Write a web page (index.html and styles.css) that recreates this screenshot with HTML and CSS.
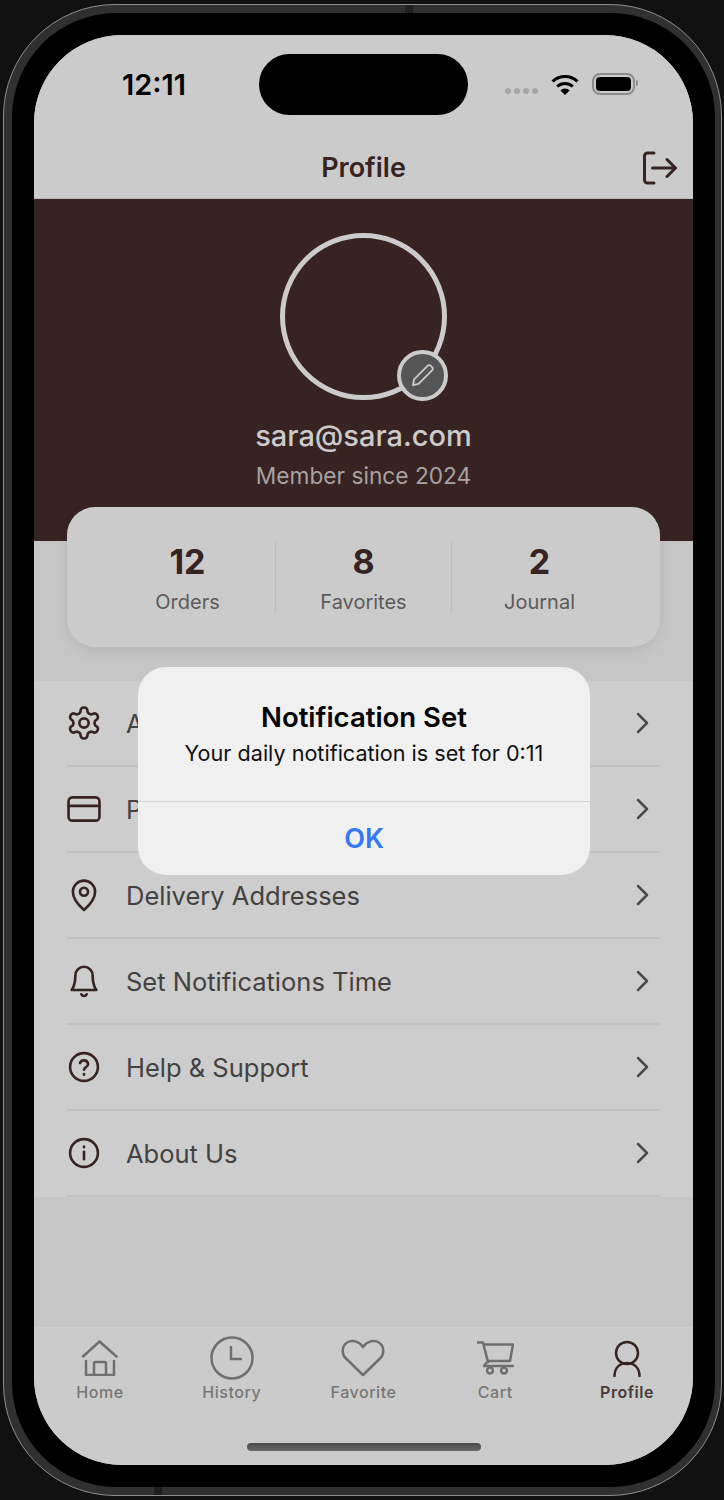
FILE: index.html
```html
<!DOCTYPE html>
<html lang="en">
<head>
    <meta charset="UTF-8">
    <meta name="viewport" content="width=device-width, initial-scale=1">
    <title>Profile</title>
    <link rel="stylesheet" href="styles.css">
</head>
<body>
<div class="device">
    <div class="bezel">
        <div class="screen">
            <div class="island"></div>

            <div class="status-bar">
                <span class="time">12:11</span>
                <div class="status-icons">
                    <div class="signal"><i></i><i></i><i></i><i></i></div>
                    <svg class="wifi" viewBox="0 0 28 21">
                        <path d="M1.5 7.5a18 18 0 0 1 25 0M6.2 12.5a11.5 11.5 0 0 1 15.6 0" fill="none" stroke="#000" stroke-width="3"/>
                        <path d="M14 21l-4.6-4.6a6.5 6.5 0 0 1 9.2 0z"/>
                    </svg>
                    <div class="battery"><i></i></div>
                </div>
            </div>

            <div class="header">
                <span></span>
                <h1>Profile</h1>
                <svg class="logout" viewBox="0 0 35 34">
                    <path d="M12 2H5.500a3 3 0 0 0-3 3v24a3 3 0 0 0 3 3H12M10.500 17h23M25 8.500l8.500 8.500-8.500 8.500"/>
                </svg>
            </div>

            <div class="hero">
                <div class="avatar">
                    <div class="edit-badge">
                        <svg viewBox="0 0 24 24">
                            <path d="M3.500 20.500l1-5L16.500 3.500a2 2 0 0 1 3 0l1 1a2 2 0 0 1 0 3L8.500 19.500z"/>
                        </svg>
                    </div>
                </div>
                <div class="email">sara@sara.com</div>
                <div class="member">Member since 2024</div>
            </div>

            <div class="stats">
                <div class="stat"><b>12</b><span>Orders</span></div>
                <div class="stat"><b>8</b><span>Favorites</span></div>
                <div class="stat"><b>2</b><span>Journal</span></div>
            </div>

            <div class="menu">
                <div class="row">
                    <svg class="row-icon" viewBox="1 1 22 22">
                        <path d="M12.220 2h-.44a2 2 0 0 0-2 2v.18a2 2 0 0 1-1 1.730l-.43.25a2 2 0 0 1-2 0l-.15-.08a2 2 0 0 0-2.730.73l-.22.38a2 2 0 0 0 .73 2.730l.15.1a2 2 0 0 1 1 1.720v.51a2 2 0 0 1-1 1.740l-.15.09a2 2 0 0 0-.73 2.730l.22.38a2 2 0 0 0 2.730.73l.15-.08a2 2 0 0 1 2 0l.43.25a2 2 0 0 1 1 1.730V20a2 2 0 0 0 2 2h.44a2 2 0 0 0 2-2v-.18a2 2 0 0 1 1-1.730l.43-.25a2 2 0 0 1 2 0l.15.08a2 2 0 0 0 2.730-.73l.22-.39a2 2 0 0 0-.73-2.730l-.15-.08a2 2 0 0 1-1-1.740v-.5a2 2 0 0 1 1-1.740l.15-.09a2 2 0 0 0 .73-2.730l-.22-.38a2 2 0 0 0-2.730-.73l-.15.08a2 2 0 0 1-2 0l-.43-.25a2 2 0 0 1-1-1.730V4a2 2 0 0 0-2-2z"/>
                        <circle cx="12" cy="12" r="3"/>
                    </svg>
                    <span>Account</span>
                    <svg class="chevron" viewBox="0 0 14 22"><path d="M2 2l9 9-9 9"/></svg>
                </div>
                <div class="row">
                    <svg class="row-icon" viewBox="1 1 22 22">
                        <rect x="2" y="4.500" width="20" height="15" rx="2.500"/>
                        <path d="M2 10h20"/>
                    </svg>
                    <span>Payment Methods</span>
                    <svg class="chevron" viewBox="0 0 14 22"><path d="M2 2l9 9-9 9"/></svg>
                </div>
                <div class="row">
                    <svg class="row-icon" viewBox="1 1 22 22">
                        <path d="M12 21.700C10.600 20.500 4.800 15.400 4.800 9.900a7.200 7.200 0 0 1 14.400 0c0 5.500-5.800 10.600-7.200 11.800z"/>
                        <circle cx="12" cy="9.900" r="2.600"/>
                    </svg>
                    <span>Delivery Addresses</span>
                    <svg class="chevron" viewBox="0 0 14 22"><path d="M2 2l9 9-9 9"/></svg>
                </div>
                <div class="row">
                    <svg class="row-icon" viewBox="1 1 22 22">
                        <path d="M12 2.800a5.600 5.600 0 0 0-5.600 5.600c0 5-1 7.500-2.400 9.400h16c-1.400-1.900-2.400-4.400-2.400-9.400A5.600 5.600 0 0 0 12 2.800zM10.300 20.600a1.900 1.900 0 0 0 3.400 0"/>
                    </svg>
                    <span>Set Notifications Time</span>
                    <svg class="chevron" viewBox="0 0 14 22"><path d="M2 2l9 9-9 9"/></svg>
                </div>
                <div class="row">
                    <svg class="row-icon" viewBox="1 1 22 22">
                        <circle cx="12" cy="12" r="9"/>
                        <path d="M9.400 9.400a2.700 2.700 0 0 1 5.200.8c0 1.700-2.600 2.200-2.600 3.600M12 16.600v.4"/>
                    </svg>
                    <span>Help &amp; Support</span>
                    <svg class="chevron" viewBox="0 0 14 22"><path d="M2 2l9 9-9 9"/></svg>
                </div>
                <div class="row">
                    <svg class="row-icon" viewBox="1 1 22 22">
                        <circle cx="12" cy="12" r="9"/>
                        <path d="M12 7.900v.4M12 11.200v4.800"/>
                    </svg>
                    <span>About Us</span>
                    <svg class="chevron" viewBox="0 0 14 22"><path d="M2 2l9 9-9 9"/></svg>
                </div>
            </div>

            <div class="spacer"></div>

            <div class="tab-bar">
                <div class="tabs">
                    <div class="tab">
                        <div class="tab-icon">
                            <svg width="36" height="36" viewBox="0 0 36 36">
                                <path d="M1 16.500 17.500 1.500l17 15M4 21v14h28V21M12 35V23.500a1.500 1.500 0 0 1 1.500-1.500h9a1.500 1.500 0 0 1 1.500 1.500V35"/>
                            </svg>
                        </div>
                        <span>Home</span>
                    </div>
                    <div class="tab">
                        <div class="tab-icon">
                            <svg width="44" height="44" viewBox="0 0 44 44">
                                <circle cx="22" cy="22" r="20.500"/>
                                <path d="M21 11v12h10"/>
                            </svg>
                        </div>
                        <span>History</span>
                    </div>
                    <div class="tab">
                        <div class="tab-icon">
                            <svg width="44" height="38" viewBox="0 0 44 38">
                                <path d="M22 36 5 19.500C0 14.500 1 7 6 3.500 11 .5 18 2 22 8c4-6 11-7.500 16-4.500 5 3.500 6 11 1 16z"/>
                            </svg>
                        </div>
                        <span>Favorite</span>
                    </div>
                    <div class="tab">
                        <div class="tab-icon">
                            <svg width="37" height="35" viewBox="0 0 37 35">
                                <path d="M0 1.500h6L11 21M7 3.500h29l-3 16.500H11l-4 5h29"/>
                                <circle cx="13" cy="29.500" r="3"/>
                                <circle cx="27" cy="29.500" r="3"/>
                            </svg>
                        </div>
                        <span>Cart</span>
                    </div>
                    <div class="tab active">
                        <div class="tab-icon">
                            <svg width="28" height="37" viewBox="0 0 28 37">
                                <circle cx="14" cy="13" r="11"/>
                                <path d="M1.500 36c0-8 5-13 12.500-13s12.500 5 12.500 13"/>
                            </svg>
                        </div>
                        <span>Profile</span>
                    </div>
                </div>
                <div class="home-bar"></div>
            </div>

            <div class="alert">
                <div class="alert-body">
                    <h2>Notification Set</h2>
                    <p>Your daily notification is set for 0:11</p>
                </div>
                <div class="alert-button">OK</div>
            </div>
        </div>
    </div>
</div>
</body>
</html>
```

FILE: styles.css
```css
body, html {
    margin: 0;
    padding: 0;
    width: 100%;
    height: 100%;
    overflow: hidden;
    background-color: #111111;
    font-family: Inter, "Noto Sans", sans-serif;
}

.device {
    position: relative;
    box-sizing: border-box;
    width: 719px;
    height: 1492px;
    margin: 4px 0 0 3px;
    padding: 8px 6px 8px 8px;
    border: 1px solid #8e8e8e;
    border-radius: 112px;
    background-color: #303030;
}

/* antenna marks on the frame */
.device::before,
.device::after {
    content: "";
    position: absolute;
    width: 8px;
    height: 8px;
    background-color: #1f1f1f;
}

.device::before {
    top: 0;
    left: 401px;
}

.device::after {
    bottom: 0;
    left: 150px;
}

.bezel {
    box-sizing: border-box;
    height: 100%;
    padding: 22px 21px 21px 22px;
    border-radius: 104px;
    background-color: #000000;
}

.screen {
    position: relative;
    display: flex;
    flex-direction: column;
    width: 659px;
    height: 1430px;
    overflow: hidden;
    border-radius: 88px;
    background-color: #c6c6c6;
}

.island {
    position: absolute;
    top: 19px;
    left: 225px;
    width: 209px;
    height: 61px;
    border-radius: 31px;
    background-color: #000000;
}

.status-bar {
    display: flex;
    align-items: center;
    box-sizing: border-box;
    height: 103px;
    padding: 0 58px 5px 88px;
    background-color: #cbcbcb;
}

.time {
    font-size: 29px;
    font-weight: 600;
    color: #000000;
}

.status-icons {
    display: flex;
    align-items: center;
    margin-left: auto;
}

.signal {
    display: flex;
    gap: 3px;
    margin: 14px 13px 0 0;
}

.signal i {
    width: 6px;
    height: 6px;
    border-radius: 50%;
    background-color: #a6a6a6;
}

.wifi {
    width: 28px;
    height: 21px;
    margin-right: 13px;
}

.battery {
    position: relative;
    box-sizing: border-box;
    width: 43px;
    height: 22px;
    padding: 2px;
    border: 2px solid #8c8c8c;
    border-radius: 8px;
}

.battery i {
    display: block;
    height: 100%;
    border-radius: 4px;
    background-color: #000000;
}

.battery::after {
    content: "";
    position: absolute;
    top: 5px;
    right: -5px;
    width: 2px;
    height: 6px;
    border-radius: 0 3px 3px 0;
    background-color: #8c8c8c;
}

.header {
    display: grid;
    grid-template-columns: 1fr auto 1fr;
    align-items: center;
    height: 60px;
    padding-right: 16px;
    border-bottom: 1px solid #b9b4b4;
    background-color: #cbcbcb;
}

.header h1 {
    margin: 0 0 2px;
    padding-left: 16px;
    font-size: 27px;
    font-weight: 600;
    color: #372322;
}

.logout {
    justify-self: end;
    width: 35px;
    height: 34px;
    fill: none;
    stroke: #372322;
    stroke-width: 3;
    stroke-linecap: round;
    stroke-linejoin: round;
}

.hero {
    display: flex;
    flex-direction: column;
    align-items: center;
    box-sizing: border-box;
    height: 342px;
    padding-top: 34px;
    background-color: #372322;
}

.avatar {
    position: relative;
    box-sizing: border-box;
    width: 167px;
    height: 167px;
    border: 5px solid #cbcbcb;
    border-radius: 50%;
}

.edit-badge {
    position: absolute;
    right: -6px;
    bottom: -6px;
    display: flex;
    align-items: center;
    justify-content: center;
    box-sizing: border-box;
    width: 51px;
    height: 51px;
    border: 4px solid #cbcbcb;
    border-radius: 50%;
    background-color: #555555;
}

.edit-badge svg {
    width: 27px;
    height: 27px;
    fill: none;
    stroke: #cbcbcb;
    stroke-width: 1.600;
    stroke-linejoin: round;
}

.email {
    margin-top: 18px;
    font-size: 29px;
    line-height: 36px;
    font-weight: 500;
    color: #cbcbcb;
}

.member {
    margin-top: 8px;
    font-size: 22.700px;
    line-height: 28px;
    color: #a8a2a1;
}

.stats {
    position: relative;
    display: flex;
    margin: -34px 33px 0;
    padding: 34px 33px;
    border-radius: 28px;
    background-color: #cbcbcb;
    box-shadow: 0 4px 14px rgba(0, 0, 0, 0.08);
}

.stat {
    flex: 1;
    display: flex;
    flex-direction: column;
    align-items: center;
    height: 72px;
    border-left: 1px solid #bdbdbd;
}

.stat:first-child {
    border-left: 0;
}

.stat b {
    margin-top: 1px;
    font-size: 34px;
    line-height: 40px;
    font-weight: 700;
    color: #372322;
}

.stat span {
    margin-top: 8px;
    font-size: 20px;
    line-height: 24px;
    color: #5c5a5a;
}

.menu {
    margin-top: 34px;
    padding: 0 33px;
    background-color: #cdcdcd;
}

.row {
    display: flex;
    align-items: center;
    box-sizing: border-box;
    height: 86px;
    border-bottom: 2px solid #c2c2c2;
}

.row span {
    margin-left: 25px;
    font-size: 25.500px;
    color: #444141;
}

.row-icon {
    flex: none;
    width: 34px;
    height: 34px;
    fill: none;
    stroke: #372322;
    stroke-width: 1.700;
    stroke-linecap: round;
    stroke-linejoin: round;
}

.chevron {
    width: 14px;
    height: 22px;
    margin: 0 10px 0 auto;
    fill: none;
    stroke: #4d4a4a;
    stroke-width: 2.500;
    stroke-linecap: round;
    stroke-linejoin: round;
}

.spacer {
    flex: 1;
}

.tab-bar {
    height: 140px;
    box-sizing: border-box;
    padding-top: 10px;
    border-top: 1px solid #bfbfbf;
    background-color: #cbcbcb;
}

.tabs {
    display: flex;
}

.tab {
    flex: 1;
    display: flex;
    flex-direction: column;
    align-items: center;
    font-size: 16px;
    line-height: 20px;
    font-weight: 500;
    letter-spacing: 0.550px;
    color: #777777;
}

.tab-icon {
    display: flex;
    align-items: center;
    justify-content: center;
    height: 44px;
    margin-bottom: 2px;
}

.tab-icon svg {
    fill: none;
    stroke: #6f6f6f;
    stroke-width: 2.500;
    stroke-linecap: round;
    stroke-linejoin: round;
}

.tab.active {
    font-weight: 600;
    color: #4a3a39;
}

.tab.active svg {
    stroke: #372322;
}

.home-bar {
    width: 234px;
    height: 8px;
    margin: 41px auto 0;
    border-radius: 4px;
    background: linear-gradient(#4a4a4a, #6a6a6a);
}

.alert {
    position: absolute;
    top: 632px;
    left: 104px;
    width: 452px;
    height: 208px;
    display: flex;
    flex-direction: column;
    border-radius: 28px;
    background-color: #f0f0f0;
    text-align: center;
}

.alert-body {
    height: 135px;
    box-sizing: border-box;
    padding-top: 32px;
    border-bottom: 1px solid #d2d2d2;
}

.alert h2 {
    margin: 0;
    font-size: 27.500px;
    line-height: 36px;
    font-weight: 600;
    color: #000000;
}

.alert p {
    margin: 4px 0 0;
    font-size: 21.600px;
    line-height: 28px;
    color: #111111;
}

.alert-button {
    flex: 1;
    display: flex;
    align-items: center;
    justify-content: center;
    font-size: 27px;
    font-weight: 600;
    color: #3478f6;
}
```
